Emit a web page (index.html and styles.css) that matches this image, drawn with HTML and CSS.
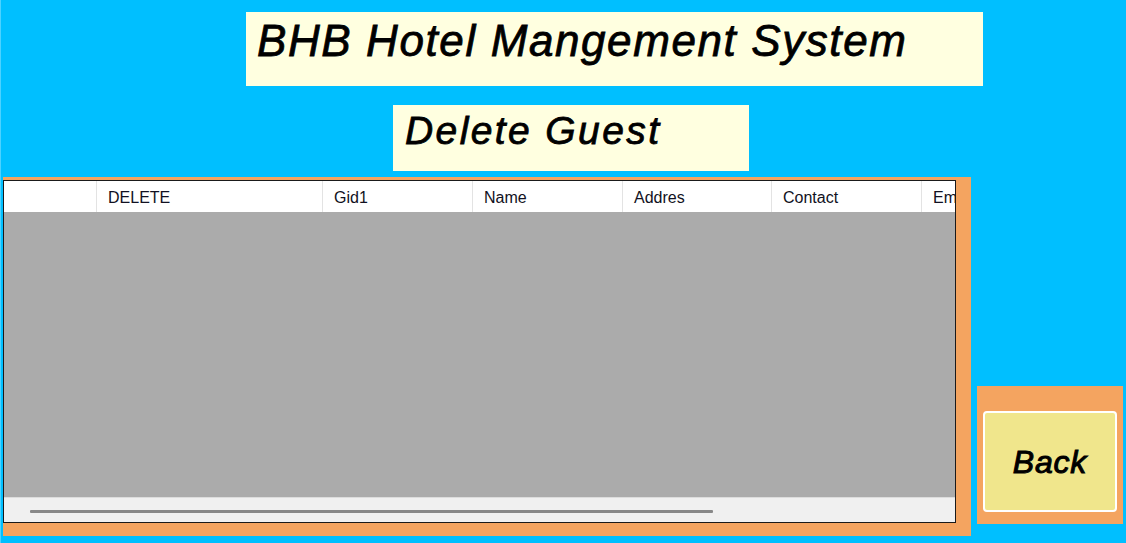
FILE: index.html
```html
<!DOCTYPE html>
<html>
<head>
<meta charset="utf-8">
<title>BHB Hotel Mangement System - Delete Guest</title>
<link rel="stylesheet" href="styles.css">
</head>
<body>
<div class="form">
  <div class="title-box"><span class="title-text">BHB Hotel Mangement System</span></div>
  <div class="sub-box"><span class="sub-text">Delete Guest</span></div>
  <div class="main">
    <div class="grid-panel">
      <div class="grid">
        <div class="grid-head">
          <div class="cell rowhead"></div>
          <div class="cell col-delete">DELETE</div>
          <div class="cell col-std">Gid1</div>
          <div class="cell col-std">Name</div>
          <div class="cell col-addr">Addres</div>
          <div class="cell col-std">Contact</div>
          <div class="cell col-last">Em</div>
        </div>
        <div class="grid-body"></div>
        <div class="hscroll"><div class="thumb"></div></div>
      </div>
    </div>
    <div class="back-panel"><button class="back">Back</button></div>
  </div>
</div>
</body>
</html>
```

FILE: styles.css
```css
html, body {
  margin: 0;
  padding: 0;
}
body {
  width: 1126px;
  height: 543px;
  overflow: hidden;
  background: #00bfff;
  font-family: "Liberation Sans", Arial, sans-serif;
}
.form {
  height: 543px;
  border-left: 1px solid #4dd2ff;
  box-sizing: border-box;
  display: flex;
  flex-direction: column;
}
.title-box {
  margin: 12px 0 0 245px;
  width: 737px;
  height: 74px;
  background: #ffffe0;
  box-sizing: border-box;
  padding: 4px 0 0 11px;
}
.title-text {
  font-style: italic;
  font-size: 44px;
  line-height: 50px;
  letter-spacing: 1.6px;
  -webkit-text-stroke: 0.8px #000;
  color: #000;
}
.sub-box {
  margin: 19px 0 0 392px;
  width: 356px;
  height: 66px;
  background: #ffffe0;
  box-sizing: border-box;
  padding: 3px 0 0 12px;
}
.sub-text {
  font-style: italic;
  font-size: 39px;
  line-height: 46px;
  letter-spacing: 2.4px;
  -webkit-text-stroke: 0.8px #000;
  color: #000;
}
.main {
  display: flex;
  align-items: flex-start;
  margin: 6px 0 0 2px;
}
.grid-panel {
  width: 968px;
  height: 359px;
  background: #f4a460;
  box-sizing: border-box;
  padding: 3px 15px 13px 0;
}
.grid {
  height: 100%;
  border: 1px solid #1a1a1a;
  box-shadow: inset 0 0 0 1px #5a5a5a;
  box-sizing: border-box;
  display: flex;
  flex-direction: column;
  background: #ababab;
  overflow: hidden;
}
.grid-head {
  display: flex;
  height: 31px;
  background: #fff;
  flex-shrink: 0;
  margin: 0;
}
.cell {
  height: 31px;
  box-sizing: border-box;
  border-right: 1px solid #e3e3e3;
  padding-left: 11px;
  font-size: 16px;
  line-height: 34px;
  color: #111122;
  white-space: nowrap;
  overflow: hidden;
  flex-shrink: 0;
}
.rowhead { width: 93px; }
.col-delete { width: 226px; }
.col-std { width: 150px; }
.col-addr { width: 149px; }
.col-last { width: 33px; border-right: none; padding-left: 11px; padding-right: 0; }
.grid-body {
  flex: 1;
  background: #ababab;
}
.hscroll {
  height: 25px;
  flex-shrink: 0;
  background: #f0f0f0;
  border-top: 1px solid #dcdcdc;
  box-sizing: border-box;
  display: flex;
  align-items: center;
  padding-left: 26px;
}
.thumb {
  width: 683px;
  height: 3px;
  background: #888;
  border-radius: 1px;
  margin-top: 2px;
}
.back-panel {
  margin: 209px 0 0 6px;
  width: 146px;
  height: 138px;
  background: #f4a460;
  box-sizing: border-box;
  padding: 25px 6px 12px 6px;
}
.back {
  display: block;
  width: 134px;
  height: 101px;
  margin: 0;
  background: #f0e68c;
  border: 2px solid #fff;
  border-radius: 4px;
  font-family: "Liberation Sans", Arial, sans-serif;
  font-style: italic;
  font-size: 32px;
  letter-spacing: 0.8px;
  -webkit-text-stroke: 1px #000;
  color: #000;
  padding: 2px 0 0 0;
  cursor: pointer;
}
```
